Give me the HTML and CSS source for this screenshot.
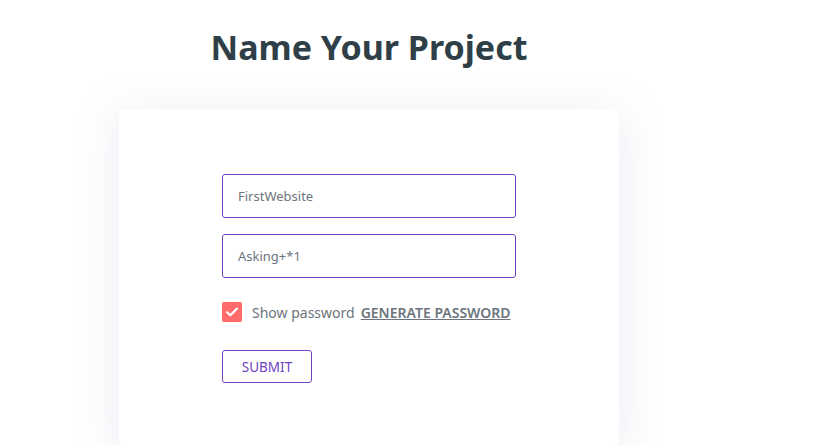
FILE: index.html
```html
<!DOCTYPE html>
<html>
<head>
<meta charset="utf-8">
<link rel="stylesheet" href="styles.css">
</head>
<body>
<main class="wrap">
  <h1 class="title">Name Your Project</h1>
  <section class="card">
    <form class="form">
      <input class="field" type="text" value="FirstWebsite">
      <input class="field" type="text" value="Asking+*1">
      <div class="options">
        <span class="check">
          <svg width="14" height="12" viewBox="0 0 14 12"><path d="M2 6.2 L5.3 9.3 L12 2.6" fill="none" stroke="#fff" stroke-width="2.2" stroke-linecap="round" stroke-linejoin="round"/></svg>
        </span>
        <span class="label">Show password</span>
        <a class="gen" href="#">GENERATE PASSWORD</a>
      </div>
      <button class="submit" type="button">SUBMIT</button>
    </form>
  </section>
</main>
</body>
</html>
```
FILE: styles.css
```css
* { box-sizing: border-box; }
html, body { margin: 0; padding: 0; background: #fff; height: 445px; overflow: hidden; }
body { font-family: "Noto Sans", "Open Sans", sans-serif; }
.wrap {
  width: 500px;
  margin-left: 119px;
  display: flex;
  flex-direction: column;
  align-items: center;
}
.title {
  margin: 23px 0 0;
  height: 86px;
  font-size: 34px;
  line-height: 48px;
  font-weight: 700;
  color: #2e3f48;
  letter-spacing: 0;
}
.card {
  width: 500px;
  height: 336px;
  background: #fff;
  border-radius: 5px;
  box-shadow: 0 8px 40px 4px rgba(215, 218, 232, 0.45);
  padding-top: 65px;
  display: flex;
  justify-content: center;
}
.form {
  width: 294px;
  display: flex;
  flex-direction: column;
}
.field {
  height: 44px;
  width: 100%;
  border: 1px solid #6f42c1;
  border-radius: 3px;
  padding: 0 15px;
  font-family: inherit;
  font-size: 13px;
  color: #6c757d;
  margin-bottom: 16px;
  outline: none;
}
.options {
  display: flex;
  align-items: center;
  margin-top: 8px;
  height: 20px;
}
.check {
  width: 20px;
  height: 20px;
  border-radius: 2px;
  background: #ff6b6b;
  display: flex;
  align-items: center;
  justify-content: center;
  margin-right: 10px;
}
.label {
  font-size: 14px;
  color: #6c757d;
  margin-right: 6px;
}
.gen {
  font-size: 14px;
  font-weight: 600;
  color: #6c757d;
  text-decoration: underline;
}
.submit {
  margin-top: 28px;
  width: 90px;
  height: 33px;
  background: #fff;
  border: 1px solid #6f42c1;
  border-radius: 3px;
  color: #6f42c1;
  font-family: inherit;
  font-size: 13.5px;
  padding: 0;
}
```
